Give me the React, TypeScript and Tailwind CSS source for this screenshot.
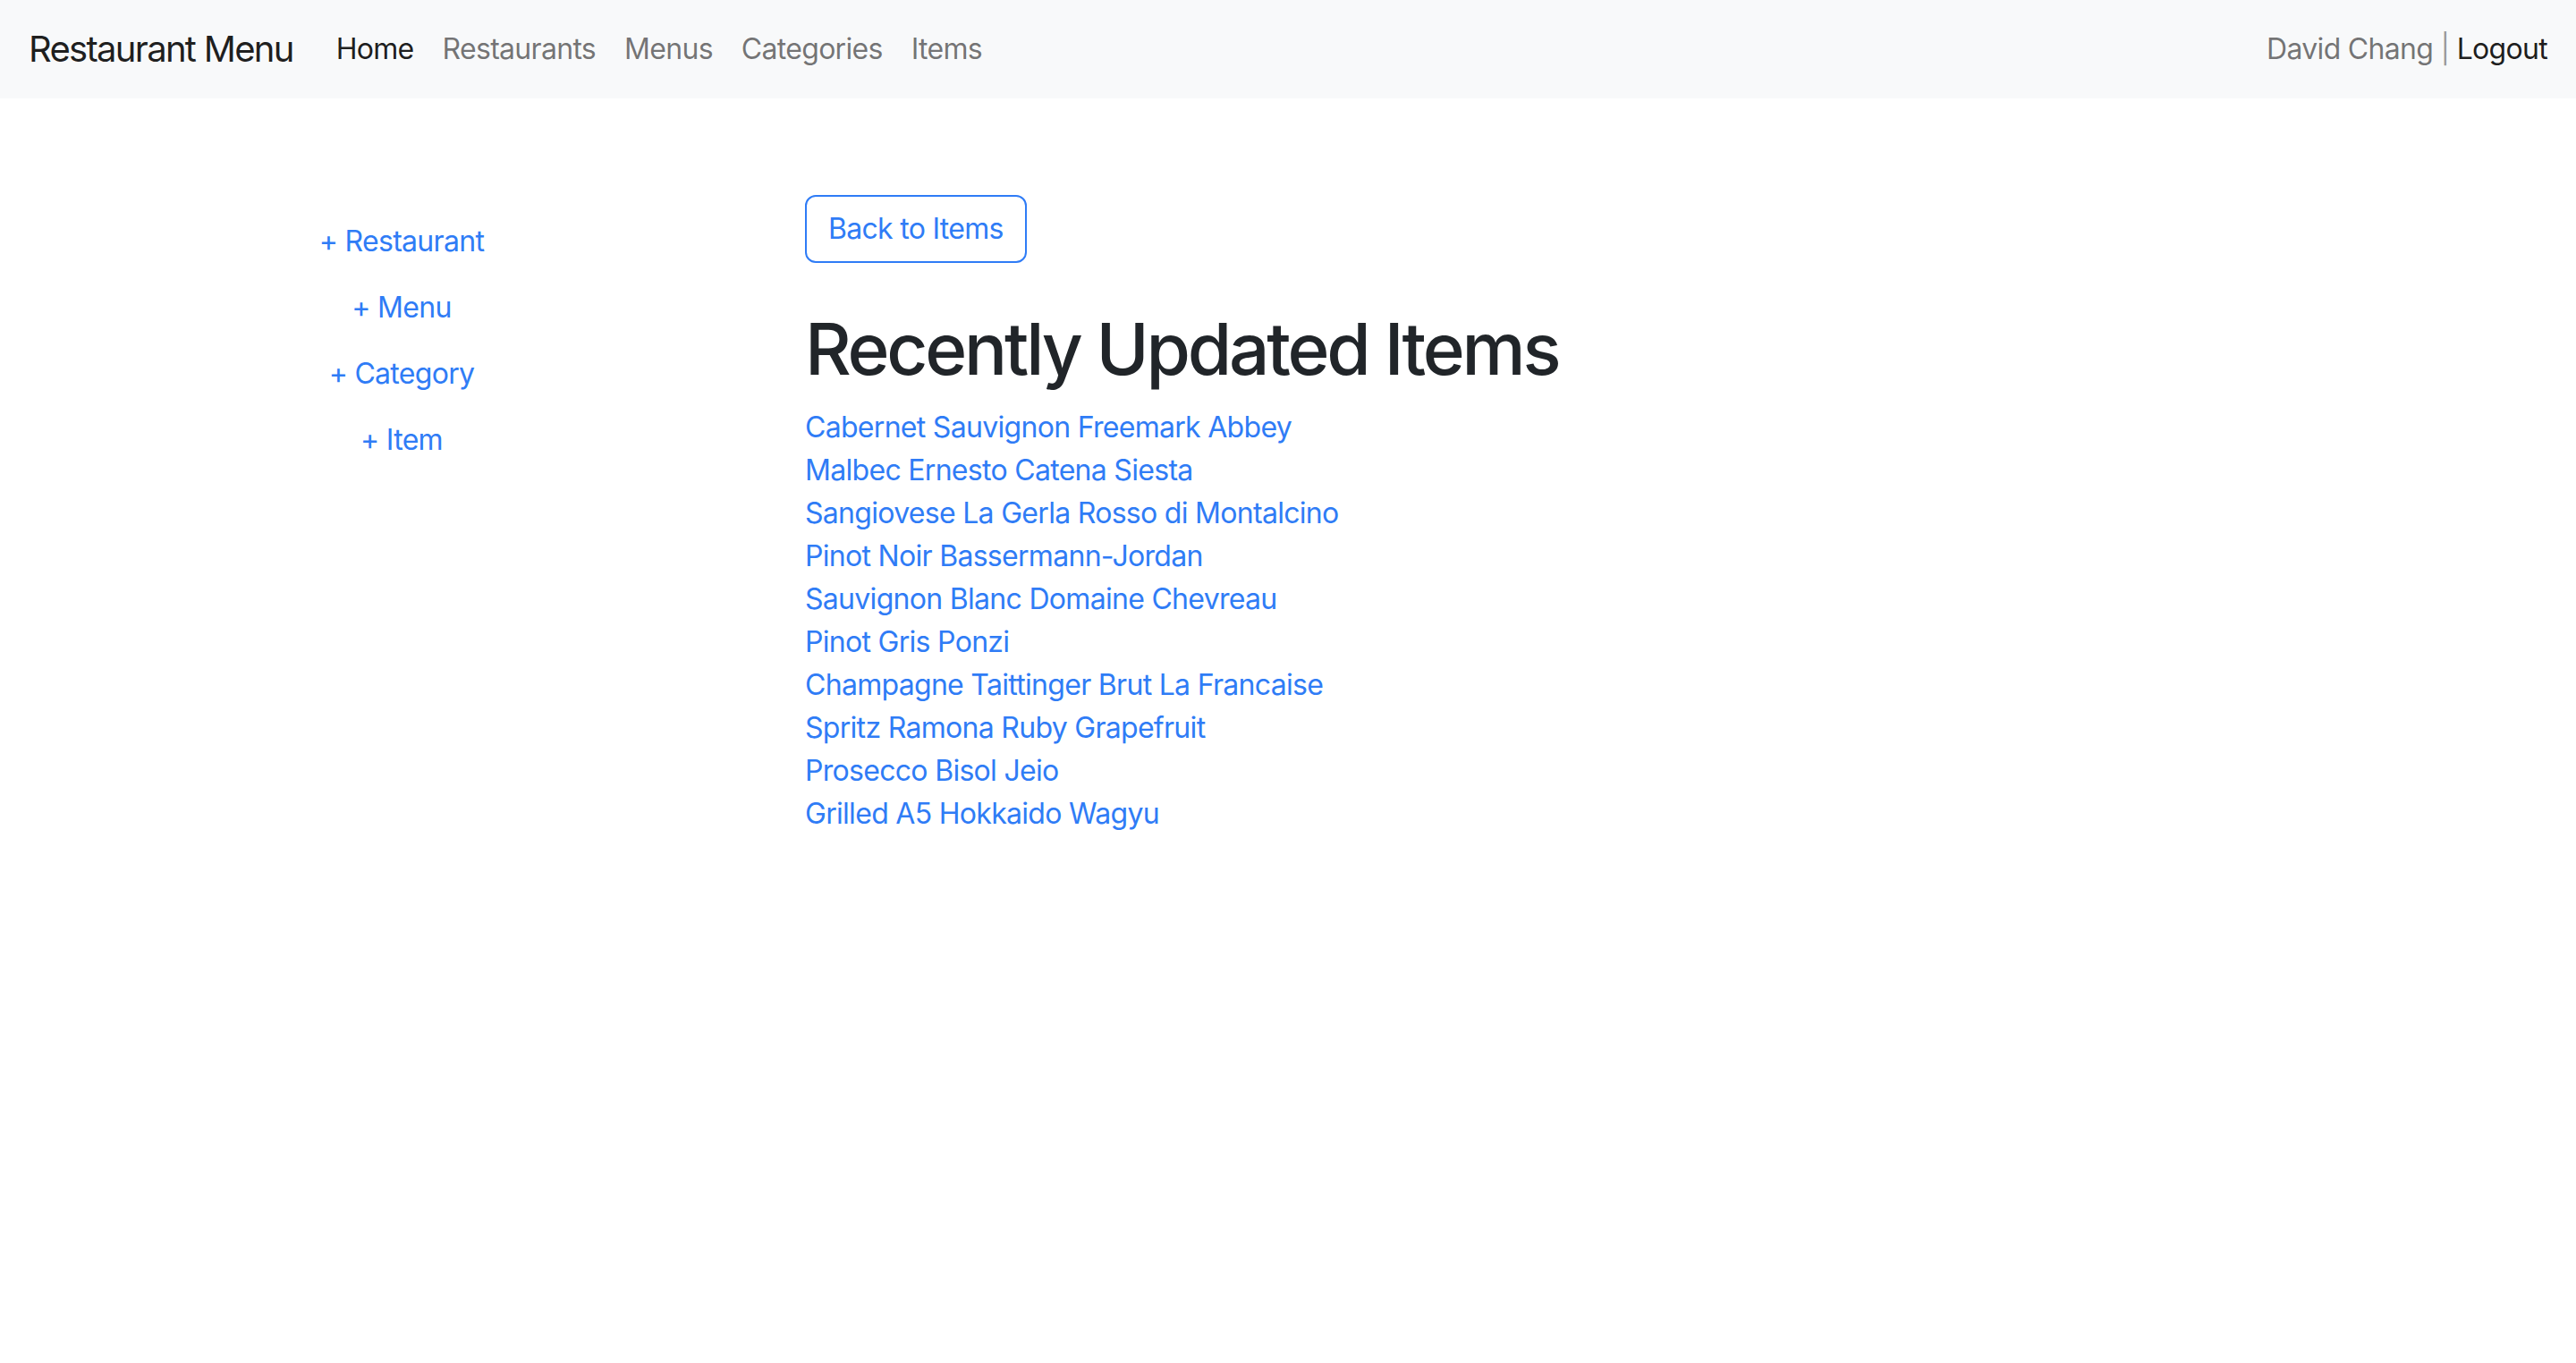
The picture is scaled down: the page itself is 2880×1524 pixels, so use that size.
import React from "react";

const navLinks = ["Home", "Restaurants", "Menus", "Categories", "Items"];

const addLinks = ["+ Restaurant", "+ Menu", "+ Category", "+ Item"];

const recentItems = [
  "Cabernet Sauvignon Freemark Abbey",
  "Malbec Ernesto Catena Siesta",
  "Sangiovese La Gerla Rosso di Montalcino",
  "Pinot Noir Bassermann-Jordan",
  "Sauvignon Blanc Domaine Chevreau",
  "Pinot Gris Ponzi",
  "Champagne Taittinger Brut La Francaise",
  "Spritz Ramona Ruby Grapefruit",
  "Prosecco Bisol Jeio",
  "Grilled A5 Hokkaido Wagyu",
];

function Navbar() {
  return (
    <nav className="flex h-[110px] items-center justify-between bg-[#f8f9fa] px-[32px]">
      <div className="flex items-center">
        <a href="#" className="mr-[32px] text-[40px] leading-[60px] tracking-[-1.7px] text-black/90">
          Restaurant Menu
        </a>
        <ul className="flex items-center">
          {navLinks.map((label, i) => (
            <li key={label}>
              <a
                href="#"
                className={
                  i === 0
                    ? "block px-[16px] text-[32px] leading-[48px] tracking-[-0.7px] text-black/90"
                    : "block px-[16px] text-[32px] leading-[48px] tracking-[-0.7px] text-black/55"
                }
              >
                {label}
              </a>
            </li>
          ))}
        </ul>
      </div>
      <div className="text-[32px] leading-[48px] tracking-[-0.7px] text-black/55">
        David Chang <span className="text-black/40">|</span> <a href="#" className="text-black/90">Logout</a>
      </div>
    </nav>
  );
}

export default function App() {
  return (
    <div className="min-h-screen bg-white font-['Inter','Liberation_Sans',sans-serif] text-[#212529]">
      <Navbar />
      <div className="flex">
        <aside className="ml-[120px] w-[658px] shrink-0 pt-[123px]">
          <ul className="flex flex-col items-center">
            {addLinks.map((label) => (
              <li key={label} className="flex h-[74px] items-center">
                <a href="#" className="text-[32px] leading-[48px] tracking-[-0.7px] text-[#2f7cf6]">
                  {label}
                </a>
              </li>
            ))}
          </ul>
        </aside>
        <main className="ml-[122px] pt-[108px]">
          <button className="h-[76px] rounded-[12px] border-2 border-[#2f7cf6] px-[24px] text-[32px] leading-[48px] tracking-[-0.7px] text-[#2f7cf6]">
            Back to Items
          </button>
          <h1 className="mt-[48px] mb-[16px] text-[80px] font-medium leading-[96px] tracking-[-3.2px] text-[#212529]">
            Recently Updated Items
          </h1>
          <ul>
            {recentItems.map((item) => (
              <li key={item}>
                <a href="#" className="text-[32px] leading-[48px] tracking-[-0.7px] text-[#2f7cf6]">
                  {item}
                </a>
              </li>
            ))}
          </ul>
        </main>
      </div>
    </div>
  );
}
